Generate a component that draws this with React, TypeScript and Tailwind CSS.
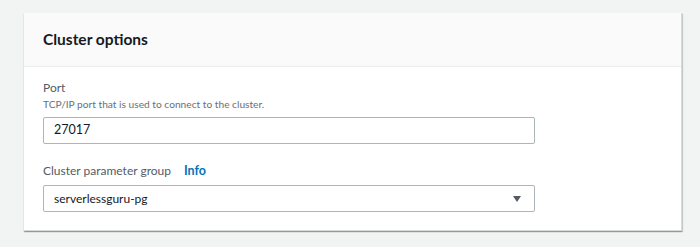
const font = { fontFamily: 'Lato, "Open Sans", Arial, sans-serif' };

export default function App() {
  return (
    <div className="w-[700px] h-[247px] bg-[#f2f3f3] pt-[13px] pl-[24px]" style={font}>
      <div className="w-[658px] h-[218px] bg-white border-r border-b border-[#d5dbdb] shadow-[0_1px_1px_0_rgba(0,28,36,0.3),1px_1px_1px_0_rgba(0,28,36,0.15)] flex flex-col">
        <div className="h-[54px] bg-[#fafafa] border-b border-[#eaeded] flex items-center px-[19px]">
          <h2 className="text-[15.5px] font-bold text-[#16191f] leading-none">Cluster options</h2>
        </div>
        <div className="px-[19px] pt-[13px] flex flex-col">
          <label className="text-[12px] text-[#545b64] leading-[16px]">Port</label>
          <p className="text-[10.2px] text-[#687078] leading-[15px] mt-[1px]">TCP/IP port that is used to connect to the cluster.</p>
          <div className="mt-[5px] w-[492px] h-[27px] border border-[#aab7b8] rounded-[2px] flex items-center px-[10px] text-[12.5px] text-[#16191f]">
            27017
          </div>
          <div className="mt-[19px] flex items-center gap-[13px] leading-[16px]">
            <span className="text-[12px] text-[#545b64]">Cluster parameter group</span>
            <span className="text-[12.5px] font-bold text-[#0073bb]">Info</span>
          </div>
          <div className="mt-[6px] w-[492px] h-[27px] border border-[#aab7b8] rounded-[2px] flex items-center justify-between pl-[10px] pr-[13px] text-[12px] text-[#16191f]">
            <span>serverlessguru-pg</span>
            <span className="w-0 h-0 border-l-[4px] border-r-[4px] border-t-[6px] border-l-transparent border-r-transparent border-t-[#545b64]" />
          </div>
        </div>
      </div>
    </div>
  );
}
